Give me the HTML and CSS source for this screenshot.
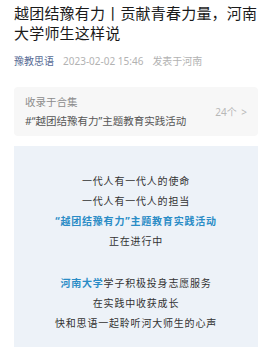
FILE: index.html
```html
<!DOCTYPE html>
<html lang="zh-CN">
<head>
<meta charset="utf-8">
<link rel="stylesheet" href="styles.css">
</head>
<body>
<div class="page">
  <h1 class="title">越团结豫有力丨贡献青春力量，河南大学师生这样说</h1>
  <div class="meta">
    <span class="author">豫教思语</span>
    <span class="date">2023-02-02 15:46</span>
    <span class="loc">发表于河南</span>
  </div>
  <div class="album">
    <div class="album-text">
      <div class="album-label">收录于合集</div>
      <div class="album-name">#“越团结豫有力”主题教育实践活动</div>
    </div>
    <div class="album-count">24个 <span class="chev">&gt;</span></div>
  </div>
  <div class="intro">
    <p class="para">
      <span class="line">一代人有一代人的使命</span>
      <span class="line">一代人有一代人的担当</span>
      <span class="line hl">“越团结豫有力”主题教育实践活动</span>
      <span class="line">正在进行中</span>
    </p>
    <p class="para">
      <span class="line"><span class="hl">河南大学</span>学子积极投身志愿服务</span>
      <span class="line">在实践中收获成长</span>
      <span class="line">快和思语一起聆听河大师生的心声</span>
    </p>
  </div>
</div>
</body>
</html>
```
FILE: styles.css
```css
html, body {
  margin: 0;
  padding: 0;
  background: #ffffff;
}
body {
  font-family: "Noto Sans", "Noto Sans CJK SC", sans-serif;
  color: #333;
}
.page {
  padding: 3px 14px 0 14px;
}
.title {
  margin: 0;
  font-size: 15px;
  line-height: 20px;
  font-weight: 400;
  color: #1a1a1a;
  letter-spacing: 0.2px;
}
.meta {
  margin-top: 10px;
  font-size: 10px;
  line-height: 16px;
  display: flex;
  gap: 9px;
}
.author {
  color: #576b95;
}
.date {
  color: #b2b2b2;
}
.loc {
  color: #b2b2b2;
}
.album {
  margin-top: 18px;
  background: #f7f7f7;
  border-radius: 4px;
  height: 49px;
  padding: 0 11px;
  display: flex;
  align-items: center;
  justify-content: space-between;
}
.album-text {
  display: flex;
  flex-direction: column;
  gap: 2px;
}
.album-label {
  font-size: 10.5px;
  line-height: 17px;
  color: #8c8c8c;
}
.album-name {
  font-size: 10.5px;
  line-height: 17px;
  color: #555;
}
.album-count {
  font-size: 10px;
  color: #b8b8b8;
}
.chev {
  margin-left: 2px;
}
.intro {
  margin-top: 10px;
  background: #edf2f8;
  padding: 25px 0 14px 0;
  text-align: center;
}
.para {
  margin: 0;
  font-size: 10px;
  line-height: 20px;
  letter-spacing: 0.8px;
  color: #333;
}
.para + .para {
  margin-top: 22px;
}
.line {
  display: block;
}
.hl {
  color: #2a8cc6;
  font-weight: 700;
}
```
